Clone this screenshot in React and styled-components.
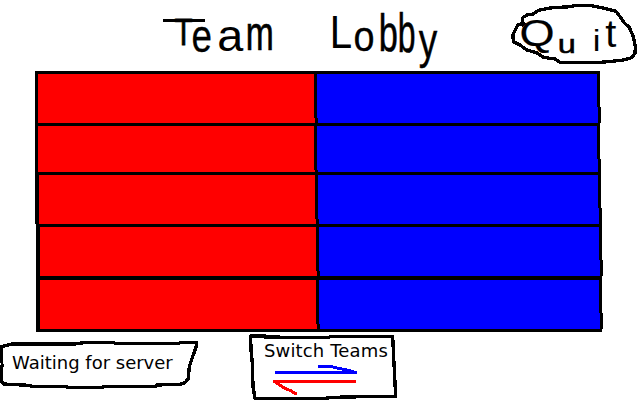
import React from "react";
import styled, { createGlobalStyle } from "styled-components";

const Global = createGlobalStyle`
  * { box-sizing: border-box; }
  body { margin: 0; background: #fff; overflow: hidden; }
`;

const Screen = styled.main`
  width: 640px;
  height: 400px;
  display: flex;
  flex-direction: column;
  background: #fff;
  color: #000;
  overflow: hidden;
`;

const Header = styled.header`
  height: 71px;
  flex: none;
  display: flex;
  align-items: flex-start;
`;

const Title = styled.h1`
  position: relative;
  margin: 0;
  width: 510px;
  padding-left: 175px;
  display: flex;
  align-items: flex-start;
  font-weight: 400;

  /* the long bar over the first letter */
  &::before {
    content: "";
    position: absolute;
    left: 163px;
    top: 19px;
    width: 42px;
    height: 3px;
    background: #000;
  }
`;

const Button = styled.button`
  border: 0;
  padding: 0;
  margin: 0;
  background: none;
  color: #000;
  position: relative;
  display: flex;
  align-items: flex-start;
  flex: none;
`;

const QuitButton = styled(Button)`
  width: 130px;
  height: 66px;
  padding-left: 8px;
`;

/* One hand-sized letter: $w is its drawn width, $base its baseline. */
const Letter = styled.span`
  display: block;
  flex: none;
  width: ${(p) => p.$w}px;
  height: ${(p) => p.$size}px;
  margin-left: ${(p) => p.$gap || 0}px;
  margin-top: ${(p) => p.$base - p.$size * 0.8465}px;
  font: ${(p) => p.$size}px/1 "Liberation Sans", sans-serif;
  -webkit-text-stroke: ${(p) => p.$bold || 0}px #000;
  text-indent: ${(p) => -p.$bear * p.$size}px;
  white-space: nowrap;
  transform: scaleX(${(p) => p.$sx});
  transform-origin: 0 0;
`;

const Table = styled.section`
  flex: none;
  width: 570px;
  height: 261px;
  margin-left: 35px;
`;

const Row = styled.div`
  display: flex;
  height: ${(p) => p.$h}px;
  margin-left: ${(p) => p.$x}px;
`;

const Slot = styled.div`
  position: relative;
  width: ${(p) => p.$w}px;
  background: ${(p) => p.$fill};
  border: 0 solid #000;
  border-top-width: ${(p) => p.$top}px;
  border-bottom-width: ${(p) => p.$bottom || 0}px;
  border-left-width: ${(p) => p.$left || 0}px;
  border-right-width: 3px;

  &::after {
    content: "";
    position: absolute;
    right: -4px;
    bottom: 0;
    width: 4px;
    height: ${(p) => p.$jog}px;
    background: linear-gradient(90deg, ${(p) => p.$fill} 1px, #000 1px);
    z-index: 1;
  }
`;

const Footer = styled.footer`
  display: flex;
  flex: 1;
`;

const StatusButton = styled(Button)`
  width: 200px;
  height: 68px;
  padding: 21px 0 0 12px;
`;

const SwitchButton = styled(Button)`
  width: 150px;
  height: 68px;
  margin-left: 48px;
  flex-direction: column;
  padding: 9px 0 0 16px;
`;

const Label = styled.span`
  font: 18px/20px "DejaVu Sans", sans-serif;
  letter-spacing: ${(p) => p.$track || 0}px;
  white-space: nowrap;
`;

const Outline = styled.svg`
  position: absolute;
  left: 0;
  top: 0;
  overflow: visible;
  fill: none;
  stroke: #000;
  stroke-width: 10;
  stroke-linejoin: round;
  stroke-linecap: round;
  shape-rendering: crispEdges;
  pointer-events: none;
`;

const Arrows = styled.svg`
  display: block;
  margin-left: 7px;
  margin-top: 3px;
  overflow: visible;
  fill: none;
  stroke-width: 9;
  stroke-linecap: round;
  stroke-linejoin: round;
  shape-rendering: crispEdges;
`;

const titleLetters = [
  { c: "T", w: 17, size: 37, base: 45, sx: 0.8, bear: 0.02, bold: 0.8 },
  { c: "e", gap: 1, w: 18, size: 46, base: 51.5, sx: 0.8, bear: 0.04, bold: 0.3 },
  { c: "a", gap: 8, w: 25, size: 45, base: 51, sx: 1.04, bear: 0.04 },
  { c: "m", gap: 4, w: 24, size: 48, base: 51, sx: 0.7, bear: 0.066, bold: 0.7 },
  { c: "L", gap: 61, w: 18, size: 46.5, base: 48, sx: 0.865, bear: 0.082 },
  { c: "o", gap: 4, w: 18, size: 43, base: 51.5, sx: 0.88, bear: 0.04, bold: 0.3 },
  { c: "b", gap: 8, w: 16, size: 52, base: 51.5, sx: 0.66, bear: 0.067, bold: 0.6 },
  { c: "b", gap: 3, w: 15, size: 56, base: 52, sx: 0.57, bear: 0.067, bold: 0.6 },
  { c: "y", gap: 4, w: 18, size: 50, base: 58, sx: 0.74, bear: 0.01, bold: 0.4 },
];

const quitLetters = [
  { c: "Q", gap: -0.5, w: 33, size: 37, base: 46, sx: 1.22, bear: 0.048, bold: 0.2 },
  { c: "u", gap: 7, w: 15, size: 25, base: 53, sx: 1.3, bear: 0.065, bold: 0.5 },
  { c: "i", gap: 22, w: 3, size: 29, base: 52, sx: 1.2, bear: 0.067 },
  { c: "t", gap: 8, w: 10, size: 38, base: 47, sx: 1.05, bear: 0.02 },
];

const rows = [
  { h: 52, x: 0, top: 3, left: 3, red: 282, blue: 283, jog: 5, jog2: 16 },
  { h: 49, x: 0, top: 3, left: 3, red: 282, blue: 283, jog: 2, jog2: 13 },
  { h: 52, x: 0, top: 3, left: 4, red: 283, blue: 283, jog: 5, jog2: 16 },
  { h: 52, x: 1, top: 3, left: 4, red: 283, blue: 283, jog: 5, jog2: 16 },
  { h: 56, x: 1, top: 4, left: 4, red: 283, blue: 283, jog: 5, jog2: 16, bottom: 3 },
];

const Letters = ({ items }) =>
  items.map((l, i) => (
    <Letter key={i} $w={l.w} $gap={l.gap} $size={l.size} $base={l.base} $sx={l.sx} $bear={l.bear} $bold={l.bold}>
      {l.c}
    </Letter>
  ));

export default function App() {
  return (
    <Screen>
      <Global />
      <Header>
        <Title>
          <Letters items={titleLetters} />
        </Title>
        <QuitButton>
          <Outline width="130" height="66" viewBox="30 0 390 198">
            <path d="M68 75V53L85 43H98L115 31L150 24L210 20L230 16H270L300 22L325 28L348 34L360 50L372 68L388 82L400 110L406 140L405 160L395 173L370 180L335 184L300 187H180L165 177L130 172L110 158L80 150L60 135L40 125L39 105L48 85L55 73L72 71" />
          </Outline>
          <Letters items={quitLetters} />
        </QuitButton>
      </Header>
      <Table>
        {rows.map((r, i) => (
          <Row key={i} $h={r.h} $x={r.x}>
            <Slot $fill="#f00" $w={r.red} $top={r.top} $left={r.left} $bottom={r.bottom} $jog={r.jog} />
            <Slot $fill="#00f" $w={r.blue} $top={r.top} $bottom={r.bottom} $jog={r.jog2} />
          </Row>
        ))}
      </Table>
      <Footer>
        <StatusButton>
          <Outline width="200" height="68" viewBox="0 36 600 204">
            <path d="M4 126V80L35 72H225L258 67H340L345 70H535L545 67H590L588 82L578 110L568 140L565 175L555 188L540 193L470 195L465 200H310L305 203H205L200 200H95L90 196L45 194L12 192L4 185V142L8 135" />
          </Outline>
          <Label>Waiting for server</Label>
        </StatusButton>
        <SwitchButton>
          <Outline width="150" height="68" viewBox="24 36 450 204">
            <path d="M115 49L32 48L33 90L37 130L39 200L45 235L245 236L280 232L370 230H467L463 150L460 90L458 49H270L268 52H77" />
          </Outline>
          <Label $track={0.15}>Switch Teams</Label>
          <Arrows width="90" height="32" viewBox="93 132 270 96">
            <path stroke="#00f" d="M109 157H348M237 139H270L300 146L330 152L346 157" />
            <path stroke="#f00" d="M345 184H103L120 196L135 205L150 211L167 221" />
          </Arrows>
        </SwitchButton>
      </Footer>
    </Screen>
  );
}
